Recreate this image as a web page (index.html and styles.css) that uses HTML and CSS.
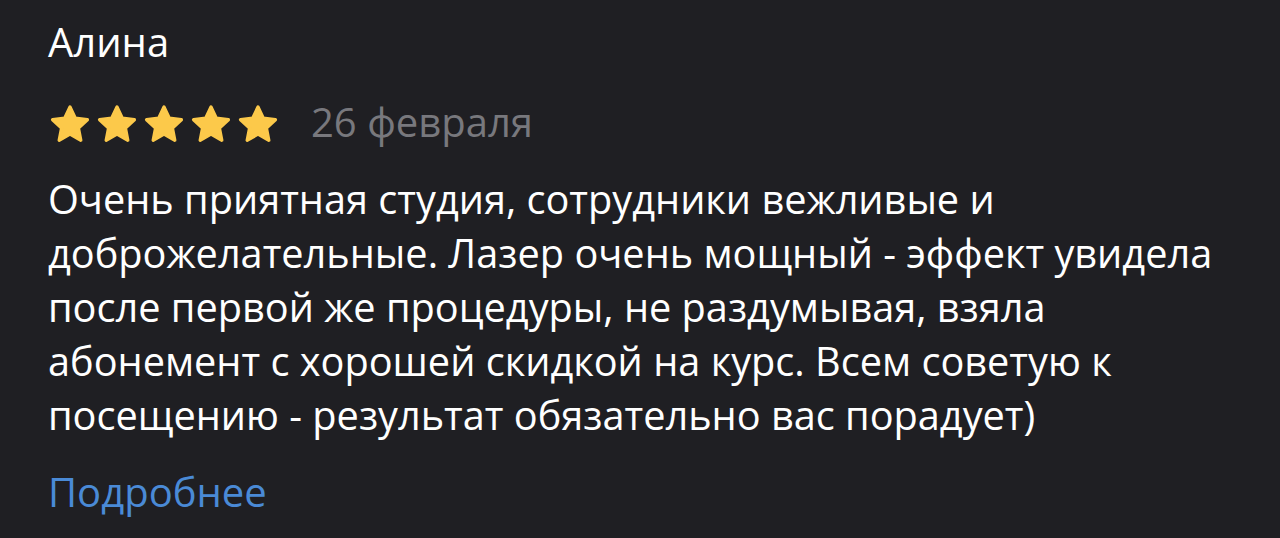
FILE: index.html
```html
<!DOCTYPE html>
<html lang="ru">
<head>
<meta charset="utf-8">
<link rel="stylesheet" href="styles.css">
</head>
<body>
<div class="review">
  <div class="author">Алина</div>
  <div class="meta">
    <div class="stars">
      <svg class="star" viewBox="0 0 24 24"><path d="M12 2.75 L14.9 8.85 L21.5 9.65 L16.6 14.25 L17.9 20.85 L12 17.55 L6.1 20.85 L7.4 14.25 L2.5 9.65 L9.1 8.85 Z" fill="#fcc94a" stroke="#fcc94a" stroke-width="1.8" stroke-linejoin="round"/></svg>
      <svg class="star" viewBox="0 0 24 24"><path d="M12 2.75 L14.9 8.85 L21.5 9.65 L16.6 14.25 L17.9 20.85 L12 17.55 L6.1 20.85 L7.4 14.25 L2.5 9.65 L9.1 8.85 Z" fill="#fcc94a" stroke="#fcc94a" stroke-width="1.8" stroke-linejoin="round"/></svg>
      <svg class="star" viewBox="0 0 24 24"><path d="M12 2.75 L14.9 8.85 L21.5 9.65 L16.6 14.25 L17.9 20.85 L12 17.55 L6.1 20.85 L7.4 14.25 L2.5 9.65 L9.1 8.85 Z" fill="#fcc94a" stroke="#fcc94a" stroke-width="1.8" stroke-linejoin="round"/></svg>
      <svg class="star" viewBox="0 0 24 24"><path d="M12 2.75 L14.9 8.85 L21.5 9.65 L16.6 14.25 L17.9 20.85 L12 17.55 L6.1 20.85 L7.4 14.25 L2.5 9.65 L9.1 8.85 Z" fill="#fcc94a" stroke="#fcc94a" stroke-width="1.8" stroke-linejoin="round"/></svg>
      <svg class="star" viewBox="0 0 24 24"><path d="M12 2.75 L14.9 8.85 L21.5 9.65 L16.6 14.25 L17.9 20.85 L12 17.55 L6.1 20.85 L7.4 14.25 L2.5 9.65 L9.1 8.85 Z" fill="#fcc94a" stroke="#fcc94a" stroke-width="1.8" stroke-linejoin="round"/></svg>
    </div>
    <div class="date">26 февраля</div>
  </div>
  <p class="text">Очень приятная студия, сотрудники вежливые и<br>доброжелательные. Лазер очень мощный - эффект увидела<br>после первой же процедуры, не раздумывая, взяла<br>абонемент с хорошей скидкой на курс. Всем советую к<br>посещению - результат обязательно вас порадует)</p>
  <a class="more" href="#">Подробнее</a>
</div>
</body>
</html>
```

FILE: styles.css
```css
html, body {
  margin: 0;
  padding: 0;
  background: #1f1f23;
}
body {
  font-family: "Open Sans", "Noto Sans", sans-serif;
  color: #ffffff;
  height: 538px;
  overflow: hidden;
}
.review {
  padding: 18px 16px 0 48px;
  display: flex;
  flex-direction: column;
  align-items: flex-start;
}
.author {
  font-size: 40px;
  line-height: 48px;
}
.meta {
  display: flex;
  align-items: center;
  margin-top: 34px;
  height: 44px;
}
.stars {
  display: flex;
  gap: 3px;
  margin-top: 4px;
}
.star {
  width: 44px;
  height: 44px;
  display: block;
}
.date {
  margin-left: 31px;
  font-size: 40px;
  line-height: 44px;
  color: #78787d;
}
.text {
  margin: 28px 0 0 0;
  font-size: 39.7px;
  line-height: 54px;
  white-space: nowrap;
}
.more {
  margin-top: 26px;
  font-size: 40px;
  line-height: 48px;
  color: #4a8ad6;
  text-decoration: none;
}
```
